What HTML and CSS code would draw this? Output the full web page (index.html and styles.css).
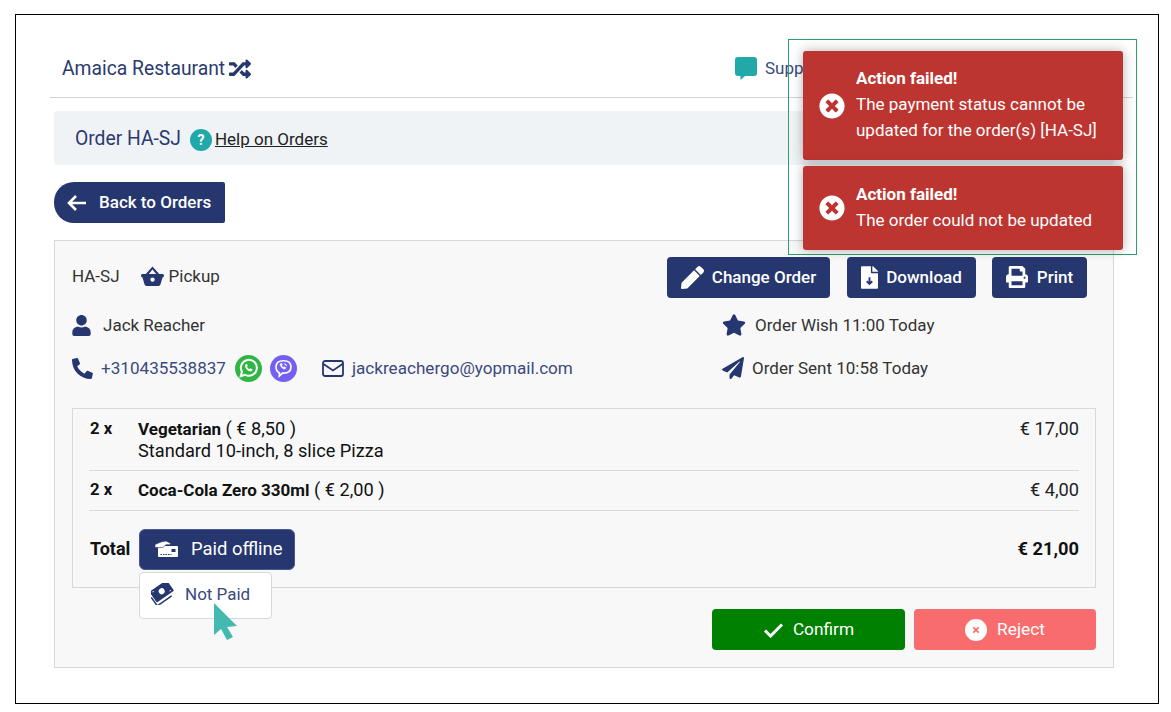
FILE: index.html
```html
<!DOCTYPE html>
<html lang="en">
<head>
<meta charset="utf-8">
<title>Order HA-SJ</title>
<link rel="stylesheet" href="styles.css">
</head>
<body>
<div class="frame">
  <header class="topbar">
    <div class="brand">Amaica Restaurant
      <svg class="ico-shuffle" viewBox="0 0 512 512"><path d="M504.971 359.029c9.373 9.373 9.373 24.569 0 33.941l-80 79.984c-15.01 15.01-40.971 4.49-40.971-16.971V416h-58.785a12.004 12.004 0 0 1-8.773-3.812l-70.556-75.596 53.333-57.143L352 336h32v-39.981c0-21.438 25.943-31.998 40.971-16.971l80 79.981zM12 176h84l52.781 56.551 53.333-57.143-70.556-75.596A11.999 11.999 0 0 0 122.785 96H12c-6.627 0-12 5.373-12 12v56c0 6.627 5.373 12 12 12zm372 0v39.984c0 21.46 25.961 31.98 40.971 16.971l80-79.984c9.373-9.373 9.373-24.569 0-33.941l-80-79.981C409.943 24.021 384 34.582 384 56.019V96h-58.785a12.004 12.004 0 0 0-8.773 3.812L96 336H12c-6.627 0-12 5.373-12 12v56c0 6.627 5.373 12 12 12h110.785c3.326 0 6.503-1.381 8.773-3.812L352 176h32z"/></svg>
    </div>
    <div class="support">
      <svg class="ico-comment" viewBox="0 0 22 23"><path d="M3 0h16a3 3 0 0 1 3 3v13a3 3 0 0 1-3 3H10l-4.500 4v-4H3a3 3 0 0 1-3-3V3a3 3 0 0 1 3-3z"/></svg>
      <span>Support</span>
    </div>
  </header>

  <section class="band">
    <h1 class="band-title">Order HA-SJ</h1>
    <span class="help-dot">?</span>
    <a class="help-link" href="#">Help on Orders</a>
  </section>

  <a class="back" href="#">
    <svg class="ico-arrow" viewBox="0 0 20 18"><path d="M9 2 2 9l7 7M2.500 9H19"/></svg>
    <span class="back-text">Back to Orders</span>
  </a>

  <section class="panel">
    <div class="row row-first">
      <div class="order-id">
        <span>HA-SJ</span>
        <span class="pickup">
          <svg class="ico-basket" viewBox="0 0 24 21"><path d="M12 0.500 5 8.500H1.500A1.500 1.500 0 0 0 0 10v.500A1.500 1.500 0 0 0 1.500 12L3.500 19a2.500 2.500 0 0 0 2.400 2h12.200a2.500 2.500 0 0 0 2.400-2l2-7A1.500 1.500 0 0 0 24 10.500V10a1.500 1.500 0 0 0-1.500-1.500H19L12 .5zM12 3.700l3.900 4.800H8.100zM12 12a2.300 2.300 0 1 1 0 4.600 2.300 2.300 0 0 1 0-4.600z" fill-rule="evenodd"/></svg>
          Pickup
        </span>
      </div>
      <div class="actions">
        <a class="btn btn-change" href="#">
          <svg class="ico-pen" viewBox="0 0 512 512"><path d="M290.74 93.24l128.02 128.02-277.99 277.99-114.14 12.6C11.35 513.54-1.56 500.62.14 485.34l12.7-114.22 277.9-277.88zm207.2-19.06l-60.11-60.11c-18.75-18.75-49.16-18.75-67.91 0l-56.55 56.55 128.02 128.02 56.55-56.55c18.75-18.76 18.75-49.16 0-67.91z"/></svg>
          Change Order</a>
        <a class="btn btn-download" href="#">
          <svg class="ico-file" viewBox="0 0 384 512"><path d="M224 136V0H24C10.700 0 0 10.700 0 24v464c0 13.300 10.700 24 24 24h336c13.300 0 24-10.700 24-24V160H248c-13.200 0-24-10.800-24-24zM377 105 279.100 7c-4.500-4.500-10.600-7-17-7H256v128h128v-6.100c0-6.300-2.500-12.400-7-16.900z"/><path class="file-arrow" d="M192 250v150M130 340l62 62 62-62"/></svg>
          Download</a>
        <a class="btn btn-print" href="#">
          <svg class="ico-print" viewBox="0 0 512 512"><path d="M448 192V77.250c0-8.490-3.370-16.620-9.370-22.630L393.370 9.370c-6-6-14.140-9.370-22.630-9.370H96C78.330 0 64 14.330 64 32v160c-35.350 0-64 28.650-64 64v112c0 8.840 7.160 16 16 16h48v96c0 17.670 14.330 32 32 32h320c17.670 0 32-14.330 32-32v-96h48c8.840 0 16-7.160 16-16V256c0-35.350-28.650-64-64-64zm-64 256H128v-96h256v96zm0-224H128V64h192v48c0 8.840 7.160 16 16 16h48v96zm48 72c-13.250 0-24-10.750-24-24 0-13.260 10.750-24 24-24s24 10.740 24 24c0 13.250-10.750 24-24 24z"/></svg>
          Print</a>
      </div>
    </div>

    <div class="row row-person">
      <div class="cell-left person">
        <svg class="ico-user" viewBox="0 0 448 512"><path d="M224 256c70.700 0 128-57.300 128-128S294.700 0 224 0 96 57.300 96 128s57.300 128 128 128zm89.600 32h-16.700c-22.200 10.200-46.900 16-72.900 16s-50.600-5.800-72.900-16h-16.700C60.200 288 0 348.200 0 422.400V464c0 26.500 21.500 48 48 48h352c26.500 0 48-21.500 48-48v-41.600c0-74.200-60.200-134.400-134.400-134.400z"/></svg>
        <span>Jack Reacher</span>
      </div>
      <div class="cell-right wish">
        <svg class="ico-star" viewBox="0 0 576 512"><path d="M259.300 17.800 194 150.200 47.900 171.500c-26.200 3.800-36.700 36.100-17.700 54.600l105.700 103-25 145.500c-4.500 26.300 23.200 46 46.400 33.700L288 439.600l130.700 68.700c23.200 12.200 50.900-7.400 46.400-33.700l-25-145.500 105.700-103c19-18.500 8.500-50.800-17.700-54.600L382 150.200 316.700 17.800c-11.700-23.600-45.600-23.900-57.400 0z"/></svg>
        <span>Order Wish 11:00 Today</span>
      </div>
    </div>

    <div class="row row-contact">
      <div class="cell-left contact">
        <svg class="ico-phone" viewBox="0 0 512 512"><path d="M14.600 24.600l104-24A24.160 24.160 0 0 1 146.100 14.500l48 112a23.940 23.940 0 0 1-6.900 28l-60.600 49.600a370.660 370.660 0 0 0 177.200 177.200l49.600-60.600a24 24 0 0 1 28-6.900l112 48a24.290 24.290 0 0 1 14 27.600l-24 104a24 24 0 0 1-23.400 18.600C204 512 0 304.500 0 48a24 24 0 0 1 14.600-23.400z"/></svg>
        <span class="link-text phone-no">+310435538837</span>
        <svg class="ico-chat" viewBox="0 0 26 26"><circle cx="13" cy="13" r="13" fill="#2fb644"/><path d="M5.500 20.500l1.200-4.300a7.700 7.700 0 1 1 3 2.900z" fill="none" stroke="#fff" stroke-width="1.900"/><path d="M10.300 8.800c-1.300 1.500-.3 3.800 1.400 5.300 1.700 1.500 3.500 2.200 4.700 1l.5-1.300-2.100-1.100-.9.800c-1-.4-1.900-1.300-2.300-2.300l.7-.9-.9-1.900z" fill="#fff"/></svg>
        <svg class="ico-chat ico-viber" viewBox="0 0 26 26"><circle cx="13" cy="13" r="13" fill="#7360f2"/><path d="M13 5.500c4.300 0 7.200 2 7.200 6s-2.900 6-7.200 6h-1l-3 2.800v-3.300c-2-.9-3.200-2.800-3.200-5.500 0-4 2.900-6 7.200-6z" fill="none" stroke="#fff" stroke-width="1.600"/><path d="M10.200 8.300c-.9 1.200 0 2.900 1.300 4 1.300 1.100 2.600 1.500 3.400.8l.3-.9-1.500-1-.6.600c-.8-.3-1.500-1-1.800-1.800l.6-.6-.7-1.400zM13.300 8.200a2.700 2.700 0 0 1 2.700 2.700" fill="#fff" stroke="#fff" stroke-width=".5"/></svg>
        <svg class="ico-mail" viewBox="0 0 22 17"><rect x="1" y="1" width="20" height="15" rx="2"/><path d="M1.500 4 11 10.500 20.500 4"/></svg>
        <span class="link-text">jackreachergo@yopmail.com</span>
      </div>
      <div class="cell-right sent">
        <svg class="ico-plane" viewBox="0 0 512 512"><path d="M476 3.200 12.500 270.600c-18.100 10.400-15.800 35.600 2.200 43.200L121 358.400l287.300-253.200c5.500-4.900 13.300 2.600 8.600 8.300L176 407v80.500c0 23.600 28.500 32.900 42.500 15.800L282 426l124.600 52.200c14.200 6 30.400-2.900 33-18.200l72-432C515 7.800 493.300-6.800 476 3.200z"/></svg>
        <span>Order Sent 10:58 Today</span>
      </div>
    </div>

    <div class="items">
      <div class="item item-one">
        <span class="qty">2 x</span>
        <div class="desc"><b>Vegetarian</b> ( € 8,50 )<br>Standard 10-inch, 8 slice Pizza</div>
        <span class="price">€ 17,00</span>
      </div>
      <div class="item item-two">
        <span class="qty">2 x</span>
        <div class="desc"><b>Coca-Cola Zero 330ml</b> ( € 2,00 )</div>
        <span class="price">€ 4,00</span>
      </div>
      <div class="total">
        <b class="total-label">Total</b>
        <div class="pay">
          <a class="pay-btn" href="#">
            <svg class="ico-paid" viewBox="0 0 23 16"><path d="M3 5h19a1 1 0 0 1 1 1v9a1 1 0 0 1-1 1H4a1 1 0 0 1-1-1z" fill="#fff"/><path d="M0 3.500 6 1l5-1 5 2.500-1.500 1.200H11L8 6.500H0z" fill="#fff" stroke="#26366f" stroke-width=".6"/><rect x="16.500" y="8" width="4" height="3" fill="#26366f"/><path d="M5.500 13.500h11" stroke="#26366f" stroke-width="1.200" stroke-dasharray="1.500 1"/></svg>
            <span class="pay-label">Paid offline</span>
          </a>
          <div class="pay-menu">
            <svg class="ico-money" viewBox="0 0 24 22"><g transform="rotate(-35 12 11)"><rect x="2" y="1.500" width="21" height="13" rx="1" fill="#26366f"/><circle cx="12.500" cy="8" r="3" fill="#fff"/><path d="M4.500 3.500h1.500M19 12.500h1.500" stroke="#fff"/><path d="M.5 7v10.500H18" fill="none" stroke="#26366f" stroke-width="1.500"/></g></svg>
            <span>Not Paid</span>
          </div>
        </div>
        <b class="total-price">€ 21,00</b>
      </div>
    </div>

    <div class="decision">
      <a class="btn-confirm" href="#">
        <svg class="ico-check" viewBox="0 0 21 16"><path d="M2 8.500 7.500 14 19 2.500"/></svg>
        <span class="decision-label">Confirm</span></a>
      <a class="btn-reject" href="#">
        <svg class="ico-reject" viewBox="0 0 22 22"><circle cx="11" cy="11" r="11" fill="#fff"/><path d="M8.300 8.300l5.400 5.400M13.700 8.300l-5.400 5.400" stroke="#f96c6e" stroke-width="1.700"/></svg>
        <span class="decision-label">Reject</span></a>
    </div>
  </section>

  <svg class="cursor" viewBox="0 0 26 40"><path d="M1 1 24 24 14 25 20 35 14 38 8 27 1 33z"/></svg>

  <aside class="toasts">
    <div class="toast toast-tall">
      <svg class="ico-x" viewBox="0 0 512 512"><path d="M256 8C119 8 8 119 8 256s111 248 248 248 248-111 248-248S393 8 256 8zm121.600 313.100c4.700 4.700 4.700 12.300 0 17L338 377.600c-4.700 4.700-12.300 4.700-17 0L256 312l-65.100 65.600c-4.700 4.700-12.300 4.700-17 0L134.400 338c-4.700-4.700-4.700-12.300 0-17l65.600-65-65.600-65.100c-4.700-4.700-4.700-12.300 0-17l39.600-39.600c4.700-4.700 12.300-4.700 17 0l65 65.700 65.100-65.600c4.700-4.700 12.300-4.700 17 0l39.600 39.600c4.700 4.700 4.700 12.300 0 17L312 256l65.600 65.100z"/></svg>
      <div class="toast-text"><b>Action failed!</b><br>The payment status cannot be<br>updated for the order(s) [HA-SJ]</div>
    </div>
    <div class="toast">
      <svg class="ico-x" viewBox="0 0 512 512"><path d="M256 8C119 8 8 119 8 256s111 248 248 248 248-111 248-248S393 8 256 8zm121.600 313.100c4.700 4.700 4.700 12.300 0 17L338 377.600c-4.700 4.700-12.300 4.700-17 0L256 312l-65.100 65.600c-4.700 4.700-12.300 4.700-17 0L134.400 338c-4.700-4.700-4.700-12.300 0-17l65.600-65-65.600-65.100c-4.700-4.700-4.700-12.300 0-17l39.600-39.600c4.700-4.700 12.300-4.700 17 0l65 65.700 65.100-65.600c4.700-4.700 12.300-4.700 17 0l39.600 39.600c4.700 4.700 4.700 12.300 0 17L312 256l65.600 65.100z"/></svg>
      <div class="toast-text"><b>Action failed!</b><br>The order could not be updated</div>
    </div>
  </aside>
</div>
</body>
</html>
```

FILE: styles.css
```css
* { box-sizing: border-box; }
html, body { margin: 0; padding: 0; background: #fff; }
body { font-family: Roboto, "Liberation Sans", sans-serif; color: #333; font-size: 17px; }
a { text-decoration: none; color: inherit; }
svg { display: block; flex: none; }

.frame {
  position: relative;
  width: 1144px;
  height: 690px;
  margin: 14px 0 0 15px;
  border: 1px solid #000;
  padding: 0 0 0 36px;
  overflow: hidden;
}

/* top bar */
.topbar {
  width: 1083px;
  height: 83px;
  margin-left: -2px;
  padding: 0 0 12px 12px;
  border-bottom: 1px solid #d4d4d4;
  display: flex;
  align-items: flex-end;
}
.brand {
  display: flex;
  align-items: center;
  gap: 4px;
  font-size: 19.300px;
  line-height: 30px;
  color: #2b3a70;
  width: 673px;
  height: 30px;
  margin-bottom: 1px;
}
.ico-shuffle { width: 22px; height: 22px; fill: #26366f; }
.support { display: flex; align-items: center; gap: 8px; font-size: 17px; color: #3a4a7c; height: 30px; margin-bottom: 2px; }
.ico-comment { width: 22px; height: 23px; fill: #21a9a9; }

/* order band */
.band {
  width: 1060px;
  height: 54px;
  margin: 13px 0 0 2px;
  padding: 0 0 0 21px;
  background: #f0f3f6;
  border-radius: 3px;
  display: flex;
  align-items: center;
}
.band-title { margin: 0; font-size: 19.300px; font-weight: 400; color: #2b3a70; }
.help-dot {
  width: 22px; height: 22px;
  margin: 4px 3px 0 9px;
  border-radius: 50%;
  background: #21a9a9;
  color: #fff;
  font-size: 14px;
  font-weight: 700;
  line-height: 22px;
  text-align: center;
}
.help-link { color: #222; text-decoration: underline; font-size: 17px; margin-top: 1px; }

/* back */
.back {
  width: 171px;
  height: 41px;
  margin: 17px 0 0 2px;
  padding-left: 13px;
  background: #26366f;
  border-radius: 20px 2px 2px 20px;
  color: #fff;
  font-size: 17px;
  font-weight: 500;
  display: flex;
  align-items: center;
  gap: 12px;
}
.back-text { margin-bottom: 2px; }
.ico-arrow { width: 20px; height: 18px; fill: none; stroke: #fff; stroke-width: 2.600; }

/* panel */
.panel {
  width: 1060px;
  height: 428px;
  margin: 17px 0 0 2px;
  padding: 16px 17px 0;
  background: #f8f8f8;
  border: 1px solid #d8d8d8;
}
.row { display: flex; align-items: center; }
.row-first { height: 41px; justify-content: space-between; padding-right: 9px; }
.order-id { display: flex; align-items: center; gap: 21px; color: #333; font-size: 17px; margin-bottom: 3px; }
.pickup { display: flex; align-items: center; gap: 5px; }
.ico-basket { width: 23px; height: 20px; fill: #26366f; }
.actions { display: flex; gap: 17px; }
.btn {
  height: 41px;
  padding-bottom: 1px;
  background: #26366f;
  border-radius: 4px;
  color: #fff;
  font-size: 17px;
  font-weight: 500;
  display: flex;
  align-items: center;
  justify-content: center;
  gap: 8px;
}
.btn-change { width: 163px; }
.btn-download { width: 129px; margin-right: -1px; }
.btn-print { width: 95px; gap: 9px; }
.ico-pen { width: 23px; height: 23px; fill: #fff; }
.ico-file { width: 17px; height: 23px; fill: #fff; }
.file-arrow { fill: none; stroke: #26366f; stroke-width: 42; }
.ico-print { width: 22px; height: 22px; fill: #fff; }

.row-person { height: 26px; margin-top: 14px; }
.row-contact { height: 28px; margin-top: 16px; }
.cell-left { width: 650px; display: flex; align-items: center; }
.cell-right { display: flex; align-items: center; }
.person { gap: 12px; }
.ico-user { width: 19px; height: 21px; fill: #26366f; }
.wish { gap: 9px; }
.ico-star { width: 24px; height: 22px; fill: #26366f; }
.sent { gap: 8px; }
.ico-plane { width: 22px; height: 22px; fill: #26366f; }
.ico-phone { width: 21px; height: 23px; fill: #26366f; margin-right: 8px; }
.link-text { color: #3a4a7c; font-size: 17.100px; }
.phone-no { margin-right: 9px; }
.ico-chat { width: 27px; height: 27px; margin-right: 8px; }
.ico-viber { margin-right: 25px; }
.ico-mail { width: 22px; height: 17px; fill: none; stroke: #26366f; stroke-width: 1.800; margin-right: 8px; }

/* items */
.items {
  width: 1024px;
  height: 180px;
  margin-top: 26px;
  padding: 0 16px;
  border: 1px solid #d8d8d8;
}
.item {
  display: grid;
  grid-template-columns: 49px 1fr auto;
  color: #111;
  line-height: 22px;
  border-bottom: 1px solid #d8d8d8;
  font-size: 18.200px;
}
.item-one { height: 62px; padding-top: 9px; }
.item-two { height: 40px; padding-top: 8px; }
.qty { font-weight: 700; font-size: 16.700px; padding-left: 1px; }
.desc b { font-size: 17px; }
.price { color: #222; }
.total { height: 76px; display: flex; align-items: center; }
.total-label { width: 50px; padding: 0 0 2px 1px; font-size: 18px; color: #111; }
.pay { position: relative; }
.pay-btn {
  width: 156px;
  height: 41px;
  background: #26366f;
  border: 1px solid #4a5a90;
  border-radius: 6px;
  color: #fff;
  font-size: 18.400px;
  display: flex;
  align-items: center;
  gap: 13px;
  padding-left: 15px;
}
.pay-label { margin-bottom: 2px; }
.ico-paid { width: 23px; height: 16px; }
.pay-menu {
  position: absolute;
  left: 0;
  top: 43px;
  width: 133px;
  height: 47px;
  background: #fff;
  border: 1px solid #d8d8d8;
  border-radius: 4px;
  display: flex;
  align-items: center;
  gap: 10px;
  padding: 0 0 2px 11px;
  color: #3a4a7c;
  z-index: 2;
}
.ico-money { width: 24px; height: 22px; }
.total-price { margin: 0 0 2px auto; font-size: 18.300px; color: #111; }

/* decision */
.decision { display: flex; justify-content: flex-end; gap: 9px; margin-top: 21px; }
.btn-confirm, .btn-reject {
  height: 41px;
  border-radius: 4px;
  color: #fff;
  display: flex;
  align-items: center;
  justify-content: center;
  font-size: 17.300px;
}
.decision-label { margin-bottom: 2px; }
.btn-confirm { width: 193px; background: #008000; gap: 9px; }
.btn-reject { width: 182px; background: #f96c6e; gap: 10px; }
.ico-check { width: 21px; height: 16px; fill: none; stroke: #fff; stroke-width: 3; }
.ico-reject { width: 22px; height: 22px; }

/* overlays */
.cursor { position: absolute; left: 197px; top: 587px; width: 26px; height: 40px; fill: #45b8b0; z-index: 3; }
.toasts {
  position: absolute;
  left: 772px;
  top: 24px;
  width: 349px;
  height: 216px;
  border: 1px solid #2e9e6b;
  padding: 11px 0 0 14px;
  display: flex;
  flex-direction: column;
  gap: 6px;
  z-index: 4;
}
.toast {
  width: 320px;
  height: 84px;
  background: #bd3530;
  border-radius: 3px;
  box-shadow: 0 0 12px rgba(0,0,0,.3);
  color: #fff;
  display: flex;
  align-items: center;
  padding-left: 16px;
  gap: 11px;
}
.toast-tall { height: 109px; }
.toast-text { font-size: 17px; line-height: 26px; margin-bottom: 2px; }
.toast-tall .toast-text { margin-bottom: 4px; }
.ico-x { width: 26px; height: 26px; fill: #fff; }
```
